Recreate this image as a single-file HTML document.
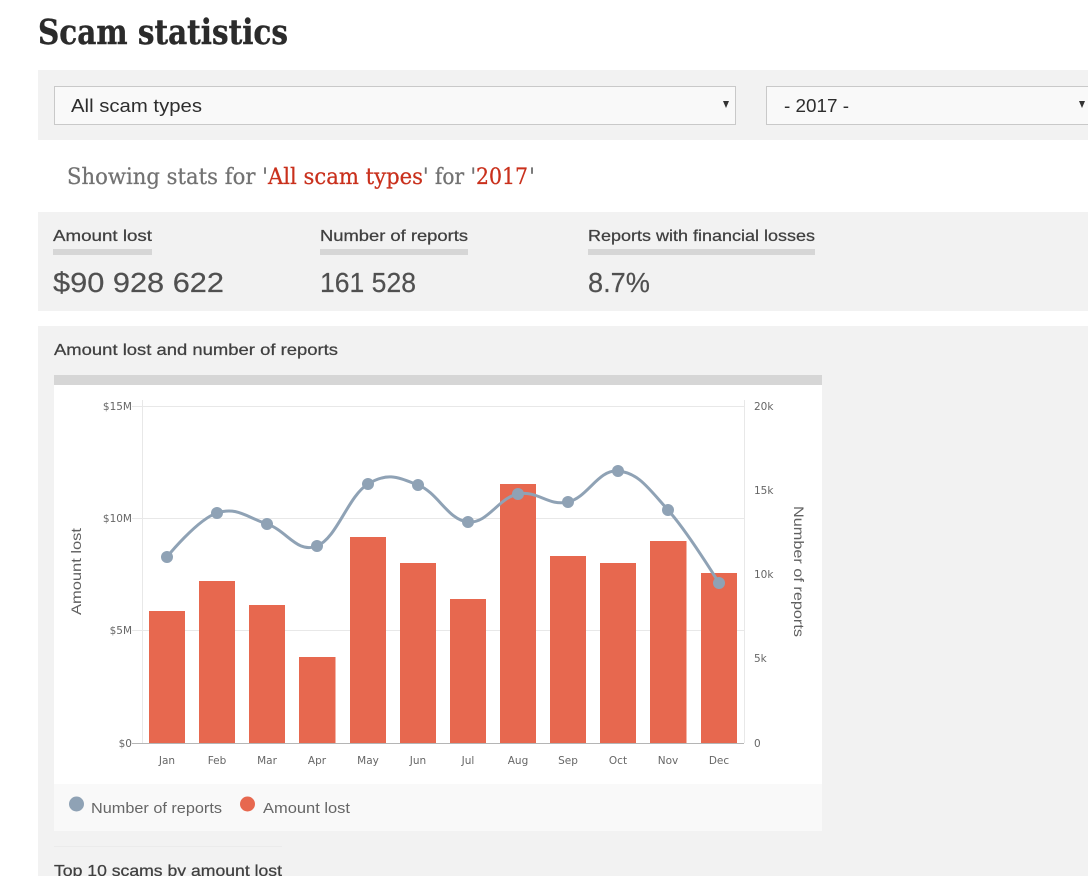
<!DOCTYPE html>
<html lang="en"><head><meta charset="utf-8"><title>Scam statistics</title>
<style>
html,body{margin:0;padding:0;background:#fff;width:1088px;height:876px;overflow:hidden}
svg{display:block}
text{font-family:"Liberation Sans",sans-serif;}
.h{font-family:"DejaVu Serif","Liberation Serif",serif;font-weight:700;font-size:35px;fill:#2b2b2b;stroke:#2b2b2b;stroke-width:.4}
.s{font-family:"DejaVu Serif","Liberation Serif",serif;font-size:22px;fill:#727272;stroke:#727272;stroke-width:.25}
.r{fill:#c9301c;stroke:#c9301c}
.sel{font-size:18.5px;fill:#2d2d2d}
.lab{font-size:16px;fill:#404040;font-weight:400;stroke:#404040;stroke-width:.25}
.val{font-size:28px;fill:#505050;stroke:#505050;stroke-width:.2}
.ax{font-family:"DejaVu Sans",sans-serif;font-size:10.5px;fill:#666}
.at{font-size:14px;fill:#606060}
.lg{font-size:15px;fill:#666}
</style></head>
<body>
<svg width="1088" height="876" viewBox="0 0 1088 876" xmlns="http://www.w3.org/2000/svg">
<rect width="1088" height="876" fill="#fff"/>
<text class="h" x="38" y="44" textLength="250" lengthAdjust="spacingAndGlyphs">Scam statistics</text>

<rect x="38" y="70" width="1050" height="70" fill="#f2f2f2"/>
<rect x="54.5" y="86.5" width="681" height="38" fill="#f9f9f9" stroke="#c9c9c9"/>
<rect x="766.5" y="86.5" width="340" height="38" fill="#f9f9f9" stroke="#c9c9c9"/>
<text class="sel" x="71" y="112" textLength="131" lengthAdjust="spacingAndGlyphs">All scam types</text>
<text class="sel" x="784" y="112" textLength="65" lengthAdjust="spacingAndGlyphs">- 2017 -</text>
<path d="M723 101h6l-3 7z" fill="#333"/>
<path d="M1079 101h6l-3 7z" fill="#333"/>

<text class="s" x="67" y="184" textLength="201" lengthAdjust="spacingAndGlyphs">Showing stats for '</text>
<text class="s r" x="268" y="184" textLength="155" lengthAdjust="spacingAndGlyphs">All scam types</text>
<text class="s" x="423" y="184" textLength="53" lengthAdjust="spacingAndGlyphs">' for '</text>
<text class="s r" x="476" y="184" textLength="52" lengthAdjust="spacingAndGlyphs">2017</text>
<text class="s" x="529" y="184">'</text>

<rect x="38" y="212" width="1050" height="99" fill="#f2f2f2"/>
<text class="lab" x="53" y="241" textLength="99" lengthAdjust="spacingAndGlyphs">Amount lost</text>
<text class="lab" x="320" y="241" textLength="148" lengthAdjust="spacingAndGlyphs">Number of reports</text>
<text class="lab" x="588" y="241" textLength="227" lengthAdjust="spacingAndGlyphs">Reports with financial losses</text>
<rect x="53" y="249" width="99" height="6" fill="#d6d6d6"/>
<rect x="320" y="249" width="148" height="6" fill="#d6d6d6"/>
<rect x="588" y="249" width="227" height="6" fill="#d6d6d6"/>
<text class="val" x="53" y="292" textLength="171" lengthAdjust="spacingAndGlyphs">$90 928 622</text>
<text class="val" x="320" y="292" textLength="96" lengthAdjust="spacingAndGlyphs">161 528</text>
<text class="val" x="588" y="292" textLength="62" lengthAdjust="spacingAndGlyphs">8.7%</text>

<rect x="38" y="326" width="1050" height="550" fill="#f2f2f2"/>
<text class="lab" x="54" y="355" textLength="284" lengthAdjust="spacingAndGlyphs">Amount lost and number of reports</text>

<rect x="54" y="375" width="768" height="456" fill="#fff"/>
<rect x="54" y="375" width="768" height="10" fill="#d6d6d6"/>
<rect x="54" y="784" width="768" height="47" fill="#f9f9f9"/>

<g stroke="#e8e8e8" stroke-width="1" fill="none">
<path d="M132 406.5H744M132 518.5H744M132 630.5H744"/>
<path d="M142.5 400V743M744.5 400V743"/>
</g>
<path d="M132 743.5H744" stroke="#b5b5b5" stroke-width="1" fill="none"/>

<g fill="#e7684f">
<rect x="149" y="611" width="36" height="132"/>
<rect x="199" y="581" width="36" height="162"/>
<rect x="249" y="605" width="36" height="138"/>
<rect x="299" y="657" width="36.500" height="86"/>
<rect x="350" y="537" width="36" height="206"/>
<rect x="400" y="563" width="36" height="180"/>
<rect x="450" y="599" width="36" height="144"/>
<rect x="500" y="484" width="36" height="259"/>
<rect x="550" y="556" width="36" height="187"/>
<rect x="600" y="563" width="36" height="180"/>
<rect x="650" y="541" width="36.500" height="202"/>
<rect x="701" y="573" width="36" height="170"/>
</g>

<path d="M167 557C167 557 197 519.600 217 513C237 506.400 247 517.400 267 524C287 530.600 297 554 317 546C337 538 348 496.200 368 484C388 471.800 398 477.400 418 485C438 492.600 448 520.200 468 522C488 523.800 498 498 518 494C538 490 548 506.600 568 502C588 497.400 598 469.400 618 471C638 472.600 648 487.600 668 510C688 532.400 719 583 719 583" fill="none" stroke="#8fa2b5" stroke-width="3"/>
<g fill="#8fa2b5">
<circle cx="167" cy="557" r="6"/><circle cx="217" cy="513" r="6"/><circle cx="267" cy="524" r="6"/><circle cx="317" cy="546" r="6"/><circle cx="368" cy="484" r="6"/><circle cx="418" cy="485" r="6"/><circle cx="468" cy="522" r="6"/><circle cx="518" cy="494" r="6"/><circle cx="568" cy="502" r="6"/><circle cx="618" cy="471" r="6"/><circle cx="668" cy="510" r="6"/><circle cx="719" cy="583" r="6"/>
</g>

<text class="ax" x="132" y="410" text-anchor="end">$15M</text>
<text class="ax" x="132" y="522" text-anchor="end">$10M</text>
<text class="ax" x="132" y="634" text-anchor="end">$5M</text>
<text class="ax" x="132" y="747" text-anchor="end">$0</text>
<text class="ax" x="754" y="410">20k</text>
<text class="ax" x="754" y="494">15k</text>
<text class="ax" x="754" y="578">10k</text>
<text class="ax" x="754" y="662">5k</text>
<text class="ax" x="754" y="747">0</text>

<text class="ax" x="167" y="764" text-anchor="middle">Jan</text>
<text class="ax" x="217" y="764" text-anchor="middle">Feb</text>
<text class="ax" x="267" y="764" text-anchor="middle">Mar</text>
<text class="ax" x="317" y="764" text-anchor="middle">Apr</text>
<text class="ax" x="368" y="764" text-anchor="middle">May</text>
<text class="ax" x="418" y="764" text-anchor="middle">Jun</text>
<text class="ax" x="468" y="764" text-anchor="middle">Jul</text>
<text class="ax" x="518" y="764" text-anchor="middle">Aug</text>
<text class="ax" x="568" y="764" text-anchor="middle">Sep</text>
<text class="ax" x="618" y="764" text-anchor="middle">Oct</text>
<text class="ax" x="668" y="764" text-anchor="middle">Nov</text>
<text class="ax" x="719" y="764" text-anchor="middle">Dec</text>

<text class="at" transform="translate(81 615) rotate(-90)" textLength="87" lengthAdjust="spacingAndGlyphs">Amount lost</text>
<text class="at" transform="translate(794 506) rotate(90)" textLength="131" lengthAdjust="spacingAndGlyphs">Number of reports</text>

<circle cx="76.500" cy="804" r="7.500" fill="#8fa2b5"/>
<circle cx="247.500" cy="804" r="7.500" fill="#e7684f"/>
<text class="lg" x="91" y="813" textLength="131" lengthAdjust="spacingAndGlyphs">Number of reports</text>
<text class="lg" x="263" y="813" textLength="87" lengthAdjust="spacingAndGlyphs">Amount lost</text>

<rect x="54" y="846" width="228" height="1" fill="#ebebeb"/>
<text class="lab" x="54" y="876" textLength="228" lengthAdjust="spacingAndGlyphs">Top 10 scams by amount lost</text>
</svg>
</body></html>
